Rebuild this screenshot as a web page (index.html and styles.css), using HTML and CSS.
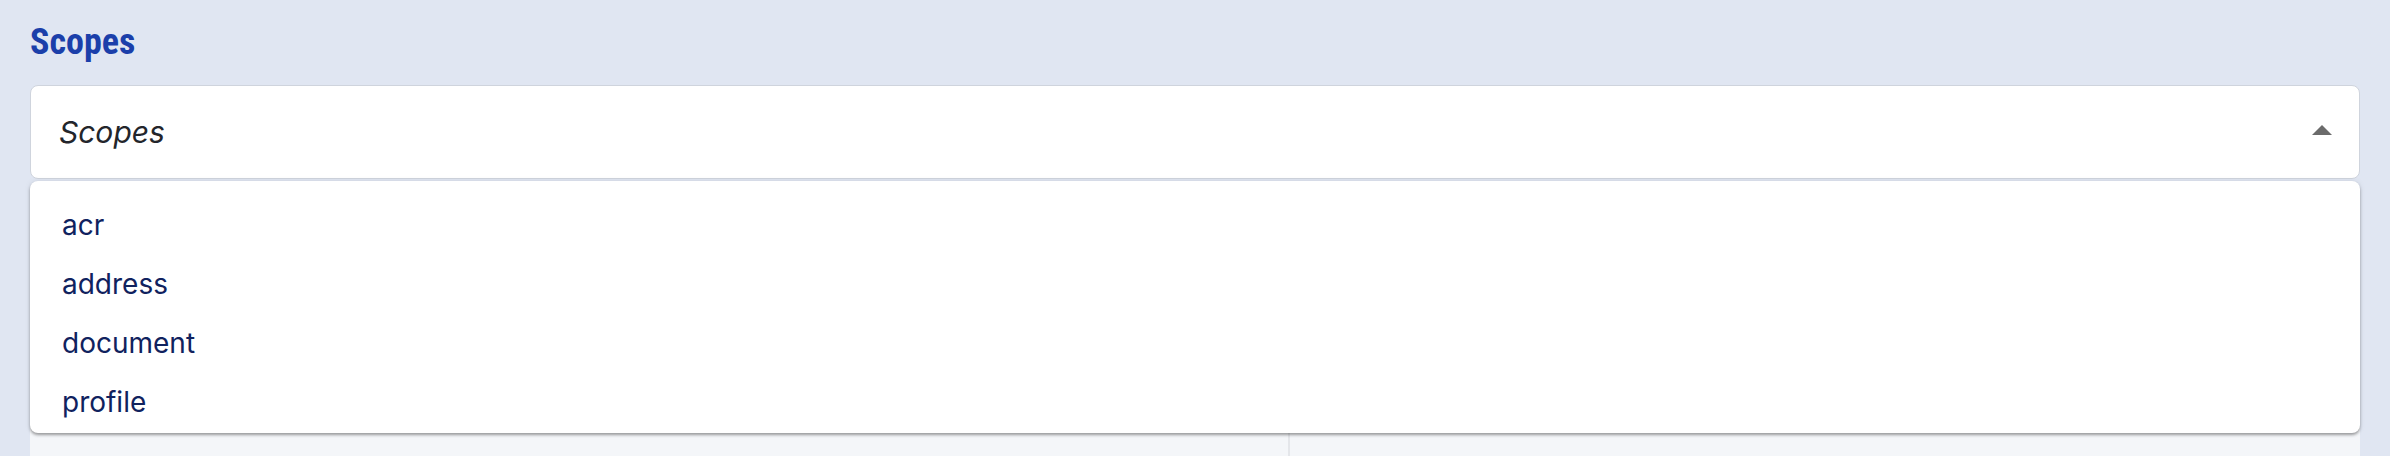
FILE: index.html
```html
<!DOCTYPE html>
<html lang="en">

<head>
    <meta charset="UTF-8">
    <meta name="viewport" content="width=device-width, initial-scale=1.0">
    <title>Scopes</title>
    <link rel="stylesheet" href="styles.css">
</head>

<body>

    <div class="page">
        <h2 class="section-title">Scopes</h2>

        <div class="select">
            <div class="select-control">
                <span class="select-placeholder">Scopes</span>
                <span class="select-arrow"></span>
            </div>
            <ul class="select-menu">
                <li>acr</li>
                <li>address</li>
                <li>document</li>
                <li>profile</li>
            </ul>
        </div>

        <div class="table-card">
            <div class="table-col"></div>
            <div class="table-col"></div>
        </div>
    </div>

</body>

</html>
```

FILE: styles.css
```css
* {
    margin: 0;
    padding: 0;
    box-sizing: border-box;
}

body {
    background-color: #e0e6f2;
    font-family: Inter, "Noto Sans", sans-serif;
}

.page {
    padding: 22px 30px 0 30px;
}

.section-title {
    font-family: "Roboto Condensed", "Liberation Sans Narrow", "DejaVu Sans Condensed", Roboto, sans-serif;
    font-stretch: condensed;
    font-weight: 700;
    font-size: 36px;
    line-height: 40px;
    color: #1b3faa;
}

.select {
    position: relative;
    margin-top: 23px;
}

.select-control {
    display: flex;
    align-items: center;
    justify-content: space-between;
    height: 94px;
    padding: 0 27px 0 28px;
    background-color: #fff;
    border: 1px solid #cfd4dd;
    border-radius: 8px;
}

.select-placeholder {
    font-style: italic;
    font-size: 30px;
    color: #23252b;
}

.select-arrow {
    width: 0;
    height: 0;
    border-left: 10px solid transparent;
    border-right: 10px solid transparent;
    border-bottom: 10px solid #6b6b6b;
    margin-top: -4px;
}

.select-menu {
    position: absolute;
    top: calc(100% + 2px);
    left: 0;
    right: 0;
    z-index: 2;
    list-style: none;
    padding: 15px 0 1px;
    background-color: #fff;
    border-radius: 8px;
    box-shadow: 0 2px 3px rgba(0, 0, 0, 0.35), 0 0 6px rgba(0, 0, 0, 0.08);
}

.select-menu li {
    height: 59px;
    line-height: 59px;
    padding-left: 32px;
    font-size: 28px;
    color: #10225e;
}

.table-card {
    display: grid;
    grid-template-columns: 54fr 46fr;
    margin-top: 22px;
    height: 255px;
    background-color: #f4f6f9;
}

.table-col + .table-col {
    border-left: 2px solid #e4e6ea;
}
```
